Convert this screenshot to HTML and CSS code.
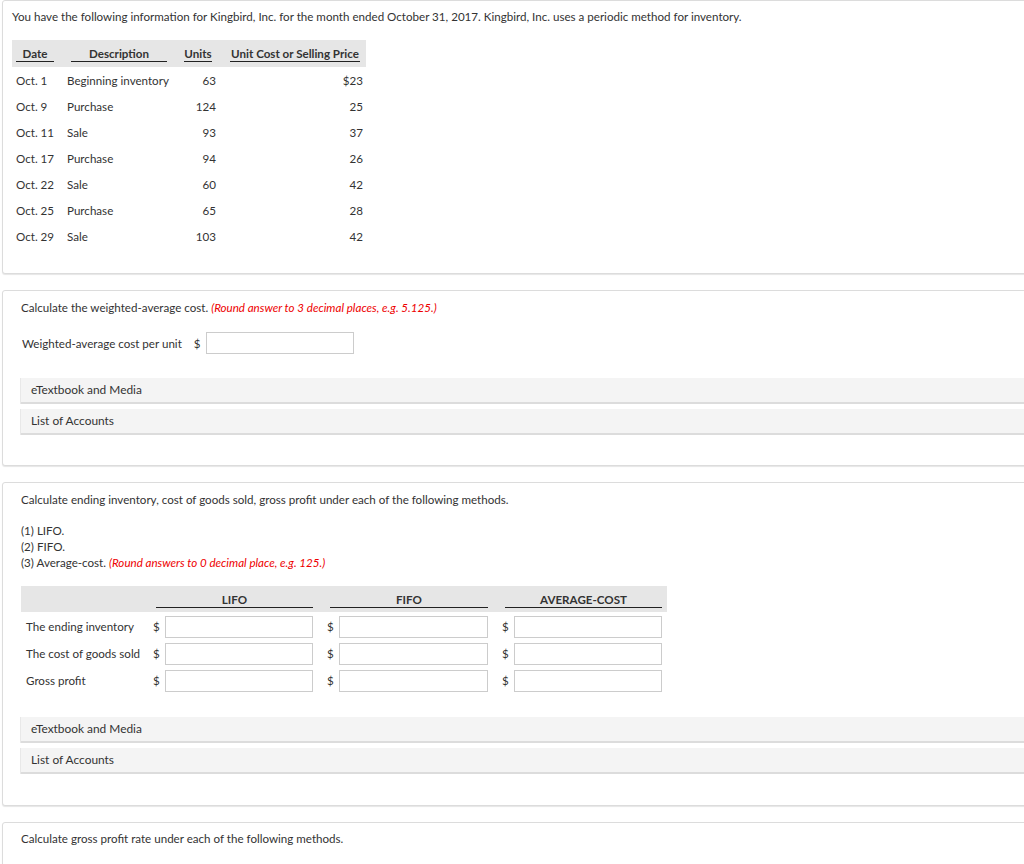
FILE: index.html
```html
<!DOCTYPE html>
<html>
<head>
<meta charset="utf-8">
<link rel="stylesheet" href="styles.css">
</head>
<body>
<div class="page">
  <section class="panel panel-first">
    <p class="line">You have the following information for Kingbird, Inc. for the month ended October 31, 2017. Kingbird, Inc. uses a periodic method for inventory.</p>
    <div class="inv">
      <div class="inv-head">
        <div class="h h-date"><span>Date</span></div>
        <div class="h h-desc"><span>Description</span></div>
        <div class="h h-units"><span>Units</span></div>
        <div class="h h-price"><span>Unit Cost or Selling Price</span></div>
      </div>
      <div class="inv-row"><div class="c-date">Oct. 1</div><div class="c-desc">Beginning inventory</div><div class="c-units">63</div><div class="c-price">$23</div></div>
      <div class="inv-row"><div class="c-date">Oct. 9</div><div class="c-desc">Purchase</div><div class="c-units">124</div><div class="c-price">25</div></div>
      <div class="inv-row"><div class="c-date">Oct. 11</div><div class="c-desc">Sale</div><div class="c-units">93</div><div class="c-price">37</div></div>
      <div class="inv-row"><div class="c-date">Oct. 17</div><div class="c-desc">Purchase</div><div class="c-units">94</div><div class="c-price">26</div></div>
      <div class="inv-row"><div class="c-date">Oct. 22</div><div class="c-desc">Sale</div><div class="c-units">60</div><div class="c-price">42</div></div>
      <div class="inv-row"><div class="c-date">Oct. 25</div><div class="c-desc">Purchase</div><div class="c-units">65</div><div class="c-price">28</div></div>
      <div class="inv-row"><div class="c-date">Oct. 29</div><div class="c-desc">Sale</div><div class="c-units">103</div><div class="c-price">42</div></div>
    </div>
  </section>

  <section class="panel panel-q2">
    <p class="line">Calculate the weighted-average cost. <em class="hint">(Round answer to 3 decimal places, e.g. 5.125.)</em></p>
    <div class="wa-row">
      <span class="wa-label">Weighted-average cost per unit</span>
      <span class="dollar">$</span>
      <input class="field" type="text">
    </div>
    <div class="bars">
      <div class="bar">eTextbook and Media</div>
      <div class="bar">List of Accounts</div>
    </div>
  </section>

  <section class="panel panel-q3">
    <p class="line">Calculate ending inventory, cost of goods sold, gross profit under each of the following methods.</p>
    <div class="methods">
      <p class="line">(1) LIFO.</p>
      <p class="line">(2) FIFO.</p>
      <p class="line">(3) Average-cost. <em class="hint">(Round answers to 0 decimal place, e.g. 125.)</em></p>
    </div>
    <div class="grid3">
      <div class="g-head"></div>
      <div class="g-head"><span>LIFO</span></div>
      <div class="g-head"><span>FIFO</span></div>
      <div class="g-head"><span>AVERAGE-COST</span></div>

      <div class="g-label">The ending inventory</div>
      <div class="g-cell"><span class="dollar">$</span><input class="field" type="text"></div>
      <div class="g-cell"><span class="dollar">$</span><input class="field" type="text"></div>
      <div class="g-cell"><span class="dollar">$</span><input class="field" type="text"></div>

      <div class="g-label">The cost of goods sold</div>
      <div class="g-cell"><span class="dollar">$</span><input class="field" type="text"></div>
      <div class="g-cell"><span class="dollar">$</span><input class="field" type="text"></div>
      <div class="g-cell"><span class="dollar">$</span><input class="field" type="text"></div>

      <div class="g-label">Gross profit</div>
      <div class="g-cell"><span class="dollar">$</span><input class="field" type="text"></div>
      <div class="g-cell"><span class="dollar">$</span><input class="field" type="text"></div>
      <div class="g-cell"><span class="dollar">$</span><input class="field" type="text"></div>
    </div>
    <div class="bars bars-q3">
      <div class="bar">eTextbook and Media</div>
      <div class="bar">List of Accounts</div>
    </div>
  </section>

  <section class="panel panel-q4">
    <p class="line">Calculate gross profit rate under each of the following methods.</p>
  </section>
</div>
</body>
</html>
```

FILE: styles.css
```css
html, body {
  overflow: hidden;
}
body {
  margin: 0;
  background: #ffffff;
  font-family: Lato, "Open Sans", "Liberation Sans", sans-serif;
  font-size: 11.6px;
  color: #333333;
}
.page {
  padding-left: 2px;
  width: 1100px;
}
.panel {
  border: 1px solid #dcdcdc;
  border-radius: 3px;
  box-shadow: 0 1px 1px #e6e6e6;
  margin-bottom: 16px;
  background: #ffffff;
}
.line {
  margin: 0;
  line-height: 16px;
}
.hint {
  color: #ee0000;
}

/* panel 1 */
.panel-first {
  padding: 8px 0 24px 9px;
}
.inv {
  margin-top: 15px;
  width: 354px;
}
.inv-head {
  display: grid;
  grid-template-columns: 55px 113px 46px 140px;
  background: #e6e6e6;
  height: 27px;
  align-items: center;
}
.h span {
  display: block;
  font-weight: 700;
  text-align: center;
  line-height: 14px;
  border-bottom: 1px solid #222;
  margin-top: 1px;
}
.h-date { padding: 0 13px 0 4px; }
.h-desc { padding: 0 13px 0 4px; }
.h-units { padding: 0 14px 0 4px; }
.h-price { padding: 0 6px 0 4px; }
.inv-row {
  display: grid;
  grid-template-columns: 55px 113px 46px 140px;
  height: 26px;
  align-items: center;
}
.c-date { padding-left: 4px; }
.c-units { text-align: right; padding-right: 10px; }
.c-price { text-align: right; padding-right: 3px; }

/* panel 2 */
.panel-q2 {
  padding: 9px 0 30px 18px;
}
.wa-row {
  display: flex;
  align-items: center;
  margin-top: 16px;
  padding-left: 1px;
}
.wa-label {
  margin-right: 12px;
}
.dollar {
  display: inline-block;
  width: 12px;
  flex: none;
}
.field {
  box-sizing: border-box;
  width: 148px;
  height: 22px;
  border: 1px solid #cccccc;
  border-radius: 0;
  padding: 0 4px;
  margin: 0;
  font: inherit;
  background: #ffffff;
}
.bars {
  margin-top: 24px;
  display: flex;
  flex-direction: column;
  gap: 5px;
}
.bar {
  background: #f4f4f4;
  border-bottom: 2px solid #dcdcdc;
  height: 24px;
  line-height: 24px;
  padding-left: 10px;
  font-size: 11.9px;
  box-shadow: -1px 0 0 #e8e8e8;
}

/* panel 3 */
.panel-q3 {
  padding: 9px 0 31px 18px;
}
.methods {
  margin-top: 15px;
}
.grid3 {
  margin-top: 15px;
  display: grid;
  grid-template-columns: 118px 160px 161px 160px;
  column-gap: 14px;
  width: 646px;
  box-sizing: border-box;
  padding-right: 5px;
  grid-auto-rows: 27px;
  background: linear-gradient(#e6e6e6, #e6e6e6) no-repeat 0 0 / 100% 26px;
}
.g-head {
  height: 26px;
  display: flex;
  align-items: flex-end;
}
.g-head span {
  display: block;
  width: 100%;
  box-sizing: border-box;
  margin-left: 3px;
  text-align: center;
  font-weight: 700;
  line-height: 14px;
  border-bottom: 1px solid #222;
  margin-bottom: 4px;
}
.g-label {
  display: flex;
  align-items: center;
  padding-left: 5px;
  height: 27px;
  white-space: nowrap;
}
.g-cell {
  display: flex;
  align-items: center;
  height: 27px;
}
.g-cell .field {
  flex: 1;
  width: auto;
  min-width: 0;
}
.bars-q3 {
  margin-top: 23px;
}

/* panel 4 */
.panel-q4 {
  padding: 8px 0 40px 18px;
}
```
